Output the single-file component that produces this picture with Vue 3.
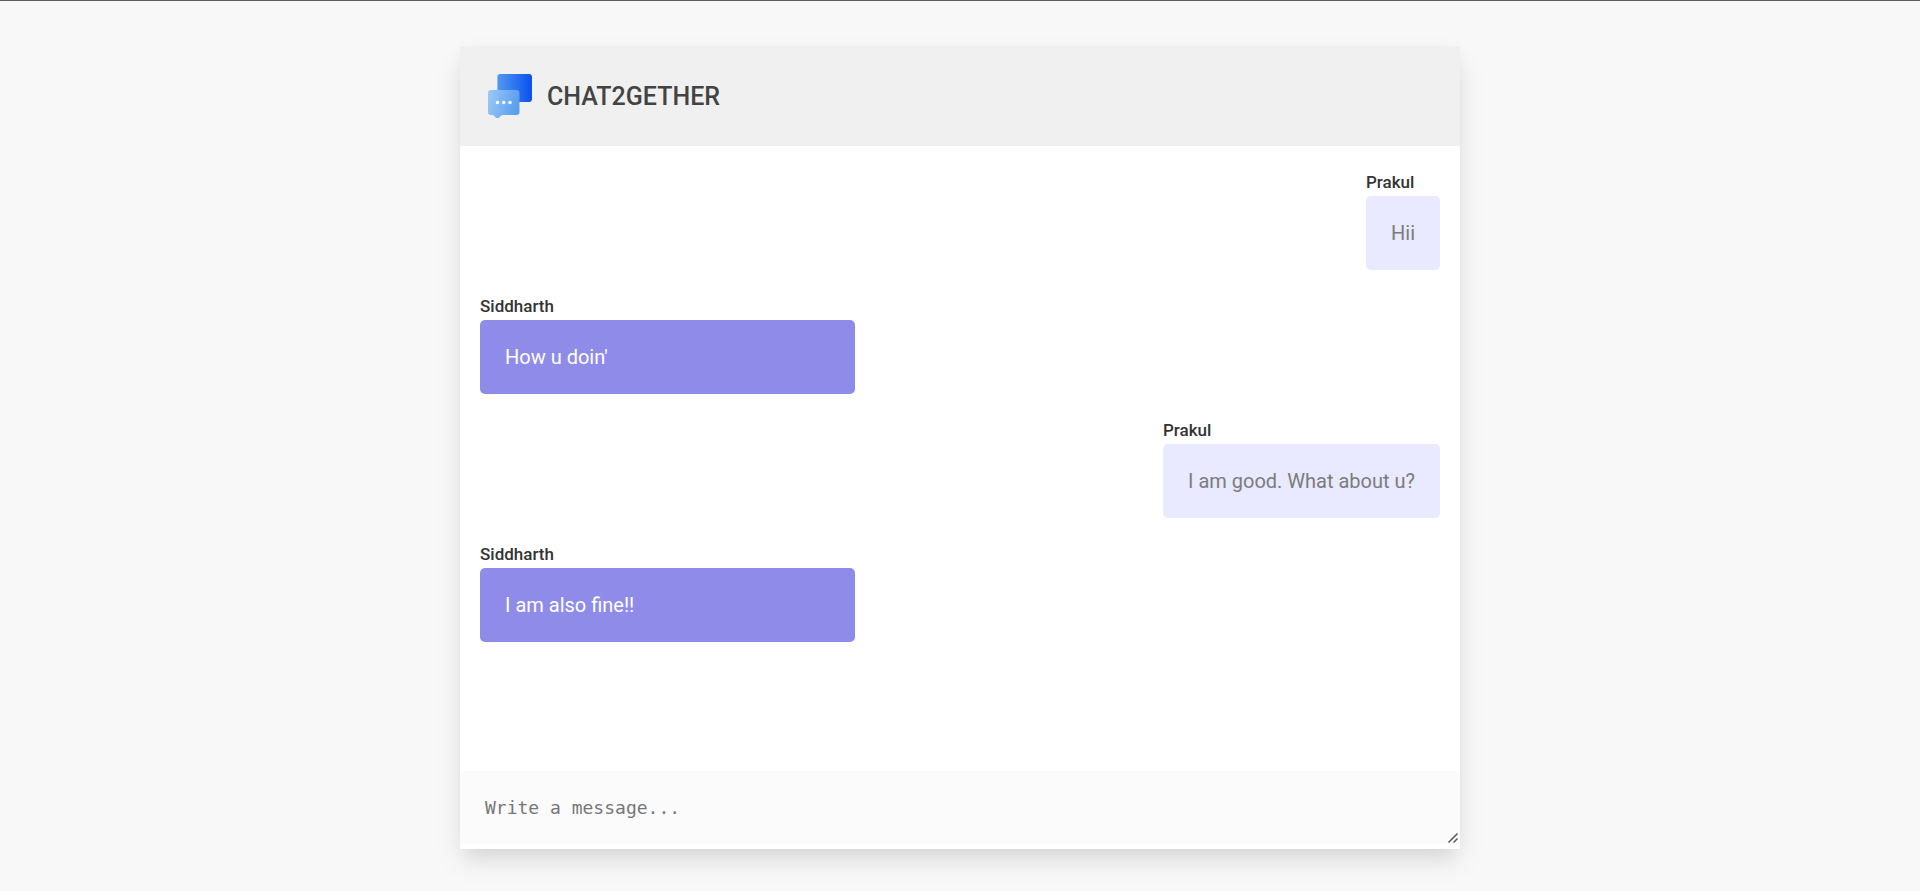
<script setup>
import { ref } from 'vue'

const draft = ref('')
const messages = ref([
  { id: 1, user: 'Prakul', text: 'Hii', own: true },
  { id: 2, user: 'Siddharth', text: "How u doin'", own: false },
  { id: 3, user: 'Prakul', text: 'I am good. What about u?', own: true },
  { id: 4, user: 'Siddharth', text: 'I am also fine!!', own: false },
])

function send() {
  const text = draft.value.trim()
  if (!text) return
  messages.value.push({ id: messages.value.length + 1, user: 'Prakul', text, own: true })
  draft.value = ''
}
</script>

<template>
  <div class="page">
    <main class="chat">
      <header class="brand">
        <svg class="logo" viewBox="0 0 44 44" aria-hidden="true">
          <defs>
            <linearGradient id="back" x1="0" x2="1" y1="0" y2="0">
              <stop offset="0" stop-color="#5299f0" />
              <stop offset="1" stop-color="#0a50ee" />
            </linearGradient>
            <linearGradient id="front" x1="0" x2="1" y1="0" y2="0.2">
              <stop offset="0" stop-color="#9dc9f5" />
              <stop offset="1" stop-color="#5a9ff0" />
            </linearGradient>
          </defs>
          <rect x="9.400" y="0" width="34.600" height="28" rx="3" fill="url(#back)" />
          <path
            d="M3 16H28.500a3 3 0 0 1 3 3V38a3 3 0 0 1-3 3H14L11.500 43.300a2.500 2.500 0 0 1-4 0L5 41H3a3 3 0 0 1-3-3V19a3 3 0 0 1 3-3Z"
            fill="url(#front)"
          />
          <circle cx="9.500" cy="28.500" r="1.700" fill="#fff" />
          <circle cx="15.700" cy="28.500" r="1.700" fill="#fff" />
          <circle cx="22" cy="28.500" r="1.700" fill="#fff" />
        </svg>
        <h1 class="title">CHAT2GETHER</h1>
      </header>

      <section class="messages" aria-label="Messages">
        <article
          v-for="message in messages"
          :key="message.id"
          class="message"
          :class="{ own: message.own }"
        >
          <h2 class="user">{{ message.user }}</h2>
          <p class="bubble">{{ message.text }}</p>
        </article>
      </section>

      <form class="composer" @submit.prevent="send">
        <textarea
          v-model="draft"
          class="input"
          rows="1"
          placeholder="Write a message..."
          aria-label="Write a message"
          @keydown.enter.prevent="send"
        ></textarea>
      </form>
    </main>
  </div>
</template>

<style>
body {
  background: #f8f8f8;
}
</style>

<style scoped>
.page {
  box-sizing: border-box;
  min-height: 100vh;
  padding: 45px 20px 42px;
  border-top: 1px solid #5f5c66;
  display: flex;
  justify-content: center;
  background: #f8f8f8;
  font-family: Roboto, "Liberation Sans", sans-serif;
}

.chat {
  flex: 0 1 1000px;
  min-width: 0;
  display: flex;
  flex-direction: column;
  background: #fff;
  box-shadow: 0 14px 28px rgba(0, 0, 0, 0.07), 0 10px 20px -6px rgba(0, 0, 0, 0.1);
}

.brand {
  display: flex;
  align-items: center;
  gap: 15px;
  padding: 28px;
  background: #f0f0f0;
}

.logo {
  width: 44px;
  height: 44px;
}

.title {
  margin: 0;
  padding-top: 2px;
  font-size: 25px;
  line-height: 32px;
  font-weight: 500;
  color: #434343;
}

.messages {
  flex: 1;
  display: flex;
  flex-direction: column;
  align-items: flex-start;
  gap: 24px;
  padding: 24px 20px;
}

.message {
  width: 375px;
  max-width: 100%;
}

.message.own {
  width: auto;
  align-self: flex-end;
}

.user {
  margin: 0 0 2px;
  font-size: 17px;
  line-height: 24px;
  font-weight: 500;
  color: #333;
}

.bubble {
  margin: 0;
  padding: 25px;
  border-radius: 5px;
  background: #8f8be8;
  color: #fff;
  font-size: 20px;
  line-height: 24px;
}

.own .bubble {
  background: #e9e9ff;
  color: #7c7c7c;
}

.composer {
  display: flex;
  padding-bottom: 5px;
}

.input {
  box-sizing: border-box;
  width: 100%;
  height: 73px;
  padding: 25px;
  border: 0;
  outline: none;
  background: #fbfbfb;
  color: #444;
  font-family: "DejaVu Sans Mono", monospace;
  font-size: 18px;
  line-height: 24px;
}

.input::placeholder {
  color: #777;
}

.input::-webkit-resizer {
  background: url("data:image/svg+xml,%3Csvg xmlns='http://www.w3.org/2000/svg' width='15' height='15' viewBox='0 0 15 15'%3E%3Cpath d='M3.500 13.500L12.500 4.500M8.500 13.500L12.500 9.500' fill='none' stroke='%23555' stroke-width='1.500'/%3E%3C/svg%3E") no-repeat right bottom;
}
</style>
